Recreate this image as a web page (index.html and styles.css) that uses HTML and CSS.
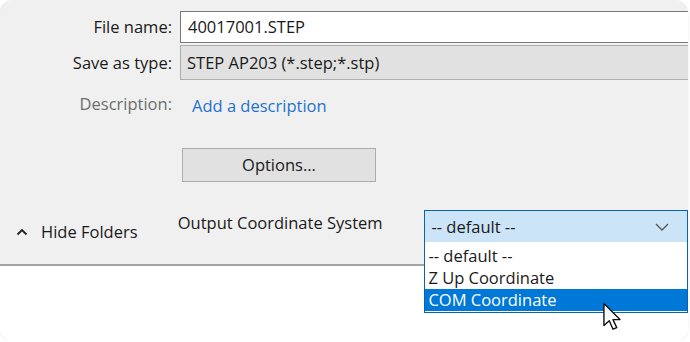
FILE: index.html
```html
<!DOCTYPE html>
<html lang="en">
<head>
  <meta charset="UTF-8">
  <title>Save As</title>
  <link rel="stylesheet" href="styles.css">
</head>
<body>
  <div class="dialog">
    <div class="panel">
      <div class="form">
        <label class="lbl">File name:</label>
        <div class="input">40017001.STEP</div>

        <label class="lbl">Save as type:</label>
        <div class="type-box">STEP AP203 (*.step;*.stp)</div>

        <label class="lbl muted">Description:</label>
        <a class="link" href="#">Add a description</a>

        <span></span>
        <div class="btn-row"><button class="btn">Options...</button></div>
      </div>

      <div class="footer">
        <button class="hide-btn">
          <svg width="12" height="8" viewBox="0 0 12 8"><path d="M1.5 6.5 L6 2 L10.5 6.5" fill="none" stroke="#222" stroke-width="1.8"/></svg>
          Hide Folders
        </button>
        <span class="out-lbl">Output Coordinate System</span>
        <div class="select">
          <div class="select-box">
            <span>-- default --</span>
            <svg width="14" height="8" viewBox="0 0 14 8"><path d="M1 1 L7 7 L13 1" fill="none" stroke="#555" stroke-width="1.3"/></svg>
          </div>
          <ul class="list">
            <li>-- default --</li>
            <li>Z Up Coordinate</li>
            <li class="sel">COM Coordinate</li>
          </ul>
          <!-- mouse pointer over the list -->
          <svg class="cursor" width="22" height="32" viewBox="0 0 20 30">
            <path d="M1.5 1.5 L1.5 22 L6.5 17.5 L10 25.5 L13.5 24 L10 16.5 L16.5 16.5 Z" fill="#fff" stroke="#111" stroke-width="1.3" stroke-linejoin="round"/>
          </svg>
        </div>
      </div>
    </div>
    <div class="blank"></div>
  </div>
</body>
</html>
```

FILE: styles.css
```css
html, body {
  margin: 0; padding: 0;
  background: #fff;
  font-family: "Open Sans", "Noto Sans", sans-serif;
  font-size: 16.5px;
  line-height: 22px;
  color: #1a1a1a;
  overflow: hidden;
}

.dialog {
  width: 688px; height: 340px;
  border-radius: 12px;
  overflow: hidden;
  box-shadow: 0 1px 3px rgba(0,0,0,0.08);
}

/* gray upper part of the dialog */
.panel {
  background: #f0f0f0;
  height: 266px;
  border-bottom: 2px solid #a3a3a3;
  padding-top: 11px;
  box-sizing: border-box;
}

.form {
  display: grid;
  grid-template-columns: 172px 530px;
  column-gap: 8px;
  row-gap: 2px;
  align-items: center;
}
.lbl { text-align: right; }
.muted { color: #6d6d6d; }

.input {
  height: 32px;
  border: 1px solid #7a7a7a;
  border-width: 1px 0 1px 1px;
  background: #fff;
  padding-left: 7px;
  line-height: 30px;
  box-sizing: border-box;
}
.type-box {
  height: 35px;
  border: 1px solid #adadad;
  border-right: 0;
  background: #e1e1e1;
  padding-left: 6px;
  line-height: 33px;
  box-sizing: border-box;
}
.link {
  color: #1e72cf;
  text-decoration: none;
  padding-left: 12px;
  height: 44px; line-height: 48px;
}
.btn-row { padding-top: 20px; }
.btn {
  width: 194px; height: 34px;
  margin-left: 2px;
  background: #e1e1e1;
  border: 1px solid #adadad;
  font: inherit; color: inherit;
}

.footer {
  display: flex;
  align-items: flex-start;
  margin-top: 28px;
}
.hide-btn {
  display: flex; align-items: center; gap: 13px;
  background: none; border: 0;
  font: inherit; color: inherit;
  padding: 11px 0 0 16px;
  width: 178px;
  text-align: left;
}
.out-lbl {
  padding-top: 2px;
  width: 247px;
}

.select {
  width: 264px;
  position: relative;
}
.select-box {
  height: 33px;
  background: #cce4f7;
  border: 1px solid #0a64ad;
  box-sizing: border-box;
  display: flex; align-items: center; justify-content: space-between;
  padding: 0 18px 0 6px;
}
.list {
  position: absolute;
  top: 32px; left: 0; right: 0;
  margin: 0; padding: 3px 0 1px;
  list-style: none;
  background: #fff;
  border: 1px solid #0a64ad;
  border-top: 0;
}
.list li {
  height: 22px; line-height: 22px;
  padding-left: 3px;
}
.list li.sel {
  background: #0078d7;
  color: #fff;
}
.cursor {
  position: absolute;
  top: 92px; left: 178px;
}

.blank { height: 74px; background: #fff; }
```
